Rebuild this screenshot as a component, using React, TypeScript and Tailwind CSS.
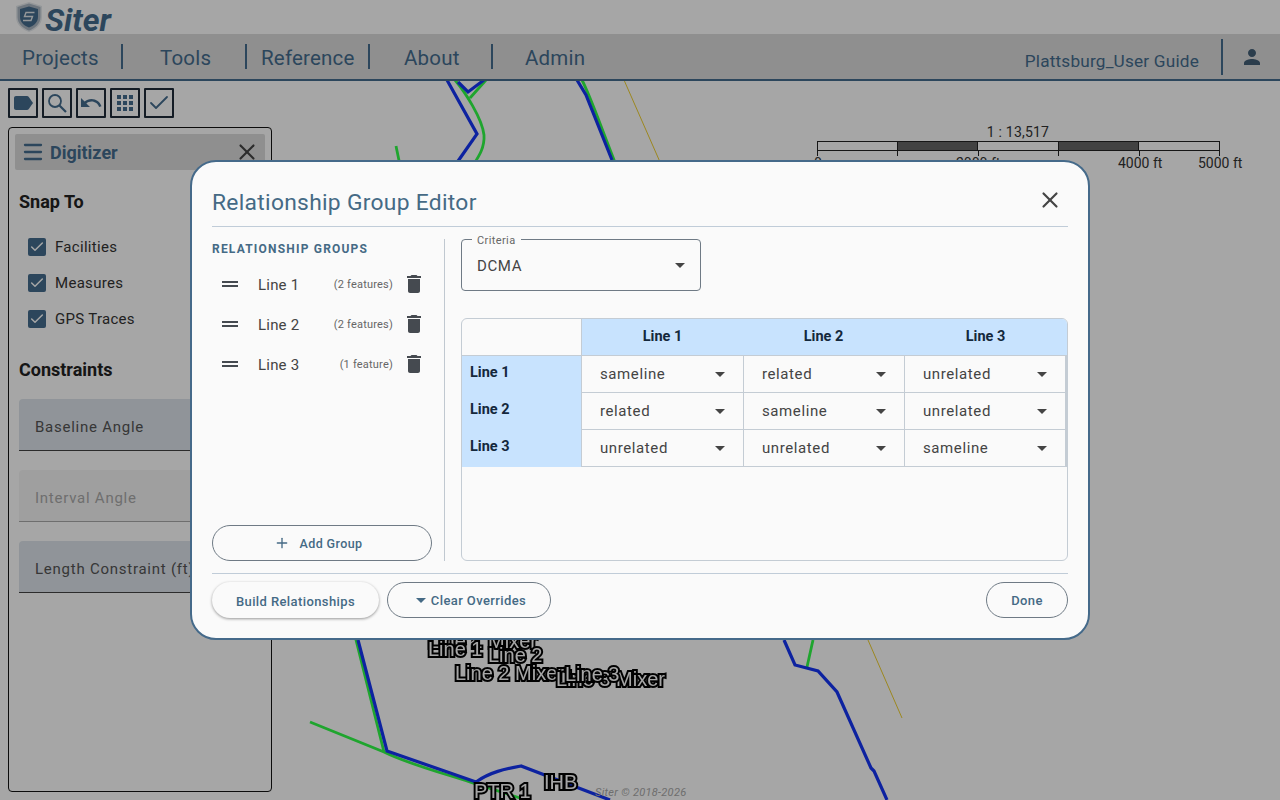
import { Check, Menu, Plus, X } from 'lucide-react';

const font = 'font-["Roboto","Liberation_Sans",sans-serif]';

const navItems = [
  { label: 'Projects', width: 'w-[123px]', pad: 'pl-[22px]' },
  { label: 'Tools', width: 'w-[124px]', pad: 'pl-[37px]' },
  { label: 'Reference', width: 'w-[123px]', pad: 'pl-[14px]' },
  { label: 'About', width: 'w-[123px]', pad: 'pl-[34px]' },
  { label: 'Admin', width: 'w-[100px]', pad: 'pl-[32px]' },
];

const groups = [
  { name: 'Line 1', count: '(2 features)' },
  { name: 'Line 2', count: '(2 features)' },
  { name: 'Line 3', count: '(1 feature)' },
];

const matrix = [
  ['sameline', 'related', 'unrelated'],
  ['related', 'sameline', 'unrelated'],
  ['unrelated', 'unrelated', 'sameline'],
];

const mapLabels = [
  { text: 'Line 1 Mixer', x: 428, y: 630 },
  { text: 'Line 1', x: 428, y: 638 },
  { text: 'Line 2', x: 488, y: 644 },
  { text: 'Line 2 Mixer', x: 455, y: 662 },
  { text: 'Line 3 Mixer', x: 556, y: 668 },
  { text: 'Line 3', x: 565, y: 663 },
  { text: 'IHB', x: 544, y: 771 },
  { text: 'PTR 1', x: 474, y: 780 },
];

const scaleTicks = ['left-0', 'left-[80px]', 'left-[161px]', 'left-[241px]', 'left-[322px]', 'left-[402px]'];

function Caret({ className = '' }: { className?: string }) {
  return (
    <svg viewBox="0 0 10 5" className={`w-[10px] h-[5px] ${className}`}>
      <path d="M0 0h10L5 5z" fill="currentColor" />
    </svg>
  );
}

function TrashIcon() {
  return (
    <svg viewBox="0 0 24 24" className="w-6 h-6 text-[#454a50]">
      <path d="M6 19c0 1.100.9 2 2 2h8c1.100 0 2-.9 2-2V7H6zM19 4h-3.500l-1-1h-5l-1 1H5v2h14z" fill="currentColor" />
    </svg>
  );
}

function ToolButton({ children }: { children: React.ReactNode }) {
  return (
    <div className="w-[30px] h-[30px] flex items-center justify-center border-2 border-[#1f2c3a] text-[#446c8e] rounded-[1px]">
      {children}
    </div>
  );
}

function CheckRow({ label }: { label: string }) {
  return (
    <div className="flex items-center gap-[9px] h-9 ml-[9px]">
      <div className="w-[18px] h-[18px] rounded-[2px] bg-[#446c8e] flex items-center justify-center">
        <Check className="w-4 h-4 text-white" strokeWidth={2.2} />
      </div>
      <span className="text-[15px] tracking-[0.3px] text-[#333]">{label}</span>
    </div>
  );
}

function FilledField({ label, disabled }: { label: string; disabled?: boolean }) {
  return (
    <div className={`h-[52px] pt-[5px] rounded-t-[4px] border-b flex items-center pl-4 ${disabled ? 'bg-[#f5f5f5] border-[#aaa] text-[#aaa]' : 'bg-[#dde4eb] border-[#444] text-[#555]'}`}>
      <span className="text-[15px] tracking-[0.75px] whitespace-nowrap">{label}</span>
    </div>
  );
}

function MapLayer() {
  return (
    <div className="absolute inset-0">
      <svg viewBox="0 0 1280 800" className="absolute inset-0 w-full h-full" fill="none">
        <g stroke="#30fe48" strokeWidth="2.800">
          <path d="M396 146 L402 175" />
          <path d="M486 80 L470 98 M455 80 C465 92 482 118 484 135 C485 150 476 160 470 170" />
          <path d="M582 80 C592 100 600 125 618 170" />
          <path d="M813 640 L807 667" />
          <path d="M355 636 L384 752 M310 722 L384 752 C410 765 450 775 476 784 L520 798" />
        </g>
        <g stroke="#1435f6" strokeWidth="3.200">
          <path d="M447 80 L477 134 L456 164 M484 80 L468 92 L458 82" />
          <path d="M577 80 L586 95 L612 160" />
          <path d="M784 640 L795 665 L818 671 L837 692 L871 768 L874 771 L887 800" />
          <path d="M358 640 L387 751 L476 782 C490 772 505 769 521 766 L610 800" />
        </g>
        <g stroke="#f0d030" strokeWidth="1">
          <path d="M624 80 L660 162" />
          <path d="M868 640 L902 718" />
        </g>
      </svg>
      <div className="opacity-[0.99]">
        {mapLabels.map(l => (
          <span
            key={l.text}
            className={`absolute text-[20px] leading-[22px] whitespace-nowrap text-white [paint-order:stroke] [-webkit-text-stroke:4px_#000] font-["Liberation_Sans",sans-serif]`}
            style={{ left: l.x, top: l.y }}
          >
            {l.text}
          </span>
        ))}
      </div>
      <span className="absolute left-[595px] top-[785px] text-[11px] italic text-[#aaa] tracking-[0.3px]">Siter © 2018-2026</span>
    </div>
  );
}

function ScaleBar() {
  return (
    <div className="absolute left-[817px] top-[125px] w-[403px] text-[#333] text-[14px]">
      <div className="text-center text-[14px] leading-[14px] mb-[2px] pr-[1px] tracking-[0.2px]">1 : 13,517</div>
      <div className="relative">
        <div className="grid grid-cols-5 h-[10px] border border-[#222]">
          <div className="border-r border-[#222] bg-white" />
          <div className="border-r border-[#222] bg-[#666]" />
          <div className="border-r border-[#222] bg-white" />
          <div className="border-r border-[#222] bg-[#666]" />
          <div className="bg-white" />
        </div>
        {scaleTicks.map(t => (
          <div key={t} className={`absolute top-[9px] w-[1px] h-[6px] bg-[#222] ${t}`} />
        ))}
      </div>
      <span className="absolute -left-[3px] top-[28px] whitespace-nowrap">0</span>
      <span className="absolute left-[139px] top-[28px] whitespace-nowrap">2000 ft</span>
      <span className="absolute left-[301px] top-[28px] whitespace-nowrap">4000 ft</span>
      <span className="absolute left-[381px] top-[28px] whitespace-nowrap">5000 ft</span>
    </div>
  );
}

function Background() {
  return (
    <div className="relative h-full flex flex-col">
      <MapLayer />
      <ScaleBar />
      <div className="relative h-[34px] bg-white flex items-start pl-[16px]">
        <svg viewBox="0 0 26 30" className="w-[26px] h-[30px] mt-[2px]">
          <path d="M13 0 L26 4 V15 C26 23 19 28 13 30 C7 28 0 23 0 15 V4 Z" fill="#e4e8ec" />
          <path d="M13 1.500 L24.500 5 V15 C24.500 22 18.500 26.500 13 28.500 C7.500 26.500 1.500 22 1.500 15 V5 Z" fill="#a9b6c2" />
          <path d="M13 4.500 L22 7 V15 C22 20.500 17.500 24 13 25.500 C8.500 24 4 20.500 4 15 V7 Z" fill="#446c8e" />
          <path d="M18.500 10.500 H10 L8.500 14.500 H16.500 L15 18.500 H7" fill="none" stroke="#e4e8ec" strokeWidth="1.400" />
        </svg>
        <span className="ml-[3px] mt-[1px] text-[32px] leading-[38px] font-bold italic text-[#446c8e]">Siter</span>
      </div>
      <div className="relative h-[47px] bg-[#dcdcdc] border-b-2 border-[#446c8e] flex items-center text-[#446c8e]">
        {navItems.map((n, i) => (
          <div key={n.label} className={`${n.width} ${n.pad} h-[25px] flex items-center ${i < 4 ? 'border-r-2 border-[#446c8e]' : ''}`}>
            <span className="text-[20.5px] leading-[25px] mt-[3px] tracking-[0.2px]">{n.label}</span>
          </div>
        ))}
        <div className="ml-auto flex items-center h-full">
          <span className="text-[17.2px] mt-[10px] tracking-[0.2px] mr-[22px]">Plattsburg_User Guide</span>
          <div className="h-[36px] w-[2px] bg-[#446c8e]" />
          <div className="w-[57px] flex justify-center">
            <svg viewBox="0 0 24 24" className="w-6 h-6 text-[#425e76]">
              <path d="M12 12c2.210 0 4-1.790 4-4s-1.790-4-4-4-4 1.790-4 4 1.790 4 4 4zm0 2c-2.670 0-8 1.340-8 4v2h16v-2c0-2.660-5.330-4-8-4z" fill="currentColor" />
            </svg>
          </div>
        </div>
      </div>
      <div className="relative flex gap-[4px] pl-[8px] pt-[7px]">
        <ToolButton>
          <svg viewBox="0 0 24 24" className="w-6 h-6"><path d="M17.600 5.800C17.200 5.300 16.600 5 16 5H5c-1.100 0-2 .9-2 2v10c0 1.100.9 2 2 2h11c.6 0 1.200-.3 1.600-.8L22 12z" fill="currentColor" /></svg>
        </ToolButton>
        <ToolButton>
          <svg viewBox="0 0 24 24" className="w-6 h-6" fill="none" stroke="currentColor" strokeWidth="1.800"><circle cx="10" cy="10" r="6" /><path d="M14.500 14.500 L21 21" strokeWidth="2.200" /></svg>
        </ToolButton>
        <ToolButton>
          <svg viewBox="0 0 24 24" className="w-6 h-6"><path d="M12.500 8c-2.650 0-5.050.99-6.900 2.600L2 7v9h9l-3.620-3.620c1.390-1.160 3.160-1.880 5.120-1.880 3.540 0 6.550 2.310 7.600 5.500l2.370-.78C21.080 11.030 17.150 8 12.500 8z" fill="currentColor" /></svg>
        </ToolButton>
        <ToolButton>
          <svg viewBox="0 0 24 24" className="w-6 h-6"><path d="M4 8h4V4H4zm6 12h4v-4h-4zm-6 0h4v-4H4zm0-6h4v-4H4zm6 0h4v-4h-4zm6-10v4h4V4zm-6 4h4V4h-4zm6 6h4v-4h-4zm0 6h4v-4h-4z" fill="currentColor" /></svg>
        </ToolButton>
        <ToolButton>
          <Check className="w-6 h-6" strokeWidth={1.800} />
        </ToolButton>
      </div>
      <div className="relative ml-2 mt-[9px] w-[264px] h-[665px] bg-white border border-[#111] rounded-[4px] p-[6px]">
        <div className="h-9 bg-[#dcdcdc] rounded-[2px] flex items-center pl-[6px] pr-[5px] text-[#446c8e]">
          <Menu className="w-6 h-6" strokeWidth={2.300} />
          <span className="ml-[5px] text-[18px] font-bold">Digitizer</span>
          <X className="ml-auto w-[26px] h-[26px] text-[#444]" strokeWidth={2} />
        </div>
        <div className="px-[4px]">
          <h3 className="mt-[20px] text-[18px] font-bold text-[#222] leading-[24px]">Snap To</h3>
          <div className="mt-[15px]">
            <CheckRow label="Facilities" />
            <CheckRow label="Measures" />
            <CheckRow label="GPS Traces" />
          </div>
          <h3 className="mt-[21px] text-[18px] font-bold text-[#222] leading-[24px]">Constraints</h3>
          <div className="mt-[17px] flex flex-col gap-[19px]">
            <FilledField label="Baseline Angle" />
            <FilledField label="Interval Angle" disabled />
            <FilledField label="Length Constraint (ft)" />
          </div>
        </div>
      </div>
    </div>
  );
}

function CellSelect({ value, last }: { value: string; last: boolean }) {
  return (
    <div className={`h-[37px] flex items-center justify-between pl-[18px] pr-[18px] border-l border-b border-[#c4ccd4] ${last ? 'border-r-2' : ''}`}>
      <span className="text-[15px] pt-[1px] tracking-[0.6px] text-[#444]">{value}</span>
      <Caret className="text-[#444]" />
    </div>
  );
}

function Dialog() {
  return (
    <div className="w-[900px] h-[480px] ml-[190px] mt-[160px] bg-[#fafafa] border-2 border-[#456a8a] rounded-[26px] pt-[19px] px-[20px] flex flex-col">
      <div className="h-[46px] border-b border-[#c0ccd8] flex items-start justify-between">
        <h2 className="text-[22.800px] leading-[44px] tracking-[0.3px] text-[#456a85]">Relationship Group Editor</h2>
        <X className="w-[26px] h-[26px] text-[#444] mr-[5px] mt-[6px]" strokeWidth={2} />
      </div>
      <div className="flex mt-[12px] h-[322px]">
        <div className="w-[233px] border-r border-[#c0c8d0] flex flex-col pr-[12px]">
          <div className="text-[12px] font-bold tracking-[1.200px] text-[#456a85] leading-[20px]">RELATIONSHIP GROUPS</div>
          <div className="mt-[6px] flex flex-col">
            {groups.map(g => (
              <div key={g.name} className="h-10 flex items-center">
                <div className="ml-[10px] mb-[3px] w-4 h-[6px] border-y-2 border-[#454a50]" />
                <span className="ml-[20px] mt-[1px] text-[15px] tracking-[0.2px] text-[#444]">{g.name}</span>
                <span className="ml-auto mt-[1px] text-[11px] tracking-[0.2px] text-[#666]">{g.count}</span>
                <div className="ml-[9px] mr-[6px] mb-[3px] flex"><TrashIcon /></div>
              </div>
            ))}
          </div>
          <div className="mt-auto h-9 pr-[8px] pt-[2px] rounded-full border border-[#6f7a85] flex items-center justify-center text-[#456a85] text-[12.500px] font-medium tracking-[0.4px]">
            <Plus className="w-[16px] h-[16px] mr-[10px] -mt-[2px]" />
            Add Group
          </div>
        </div>
        <div className="ml-[16px] flex-1 flex flex-col">
          <div className="relative h-[52px] w-[240px] border border-[#6f7a85] rounded-[4px] flex items-center justify-between pl-[15px] pr-[15px]">
            <span className="absolute -top-[6px] left-[10px] bg-[#fafafa] px-[5px] text-[11px] leading-[14px] tracking-[0.4px] text-[#666]">Criteria</span>
            <span className="text-[15px] pt-[3px] tracking-[0.6px] text-[#444]">DCMA</span>
            <Caret className="text-[#444]" />
          </div>
          <div className="mt-[27px] flex-1 border border-[#c4ccd4] rounded-[6px] overflow-hidden">
            <div className="grid grid-cols-[119px_162px_161px_163px]">
              <div className="h-[37px] border-b border-[#c4ccd4]" />
              {['Line 1', 'Line 2', 'Line 3'].map((h, i) => (
                <div key={h} className={`h-[37px] bg-[#c8e3fe] border-b border-[#c4ccd4] flex items-center justify-center text-[14.500px] font-bold text-[#14283c] ${i === 0 ? 'border-l' : ''}`}>{h}</div>
              ))}
              {matrix.map((row, r) => (
                <div key={r} className="contents">
                  <div className="h-[37px] bg-[#c8e3fe] pl-2 pt-[6px] text-[14.500px] font-bold text-[#14283c]">{`Line ${r + 1}`}</div>
                  {row.map((v, c) => (
                    <CellSelect key={c} value={v} last={c === 2} />
                  ))}
                </div>
              ))}
            </div>
          </div>
        </div>
      </div>
      <div className="mt-[12px] border-t border-[#c0ccd8] pt-[8px] flex items-center gap-2 text-[13px] font-medium tracking-[0.4px] text-[#456a85]">
        <div className="w-[167px] h-9 pt-[3px] rounded-full bg-[#fafafa] shadow-[0_1px_3px_rgba(0,0,0,0.4)] flex items-center justify-center">Build Relationships</div>
        <div className="w-[164px] h-9 pt-[2px] pl-[4px] rounded-full border border-[#6f7a85] flex items-center justify-center">
          <Caret className="w-[8px] h-[4px] mr-[5px] -mt-[2px]" />
          Clear Overrides
        </div>
        <div className="ml-auto w-[82px] h-9 pt-[2px] rounded-full border border-[#6f7a85] flex items-center justify-center">Done</div>
      </div>
    </div>
  );
}

export default function App() {
  return (
    <div className={`relative w-[1280px] h-[800px] overflow-hidden bg-white ${font}`}>
      <Background />
      <div className="absolute inset-0 bg-black/35">
        <Dialog />
      </div>
    </div>
  );
}
